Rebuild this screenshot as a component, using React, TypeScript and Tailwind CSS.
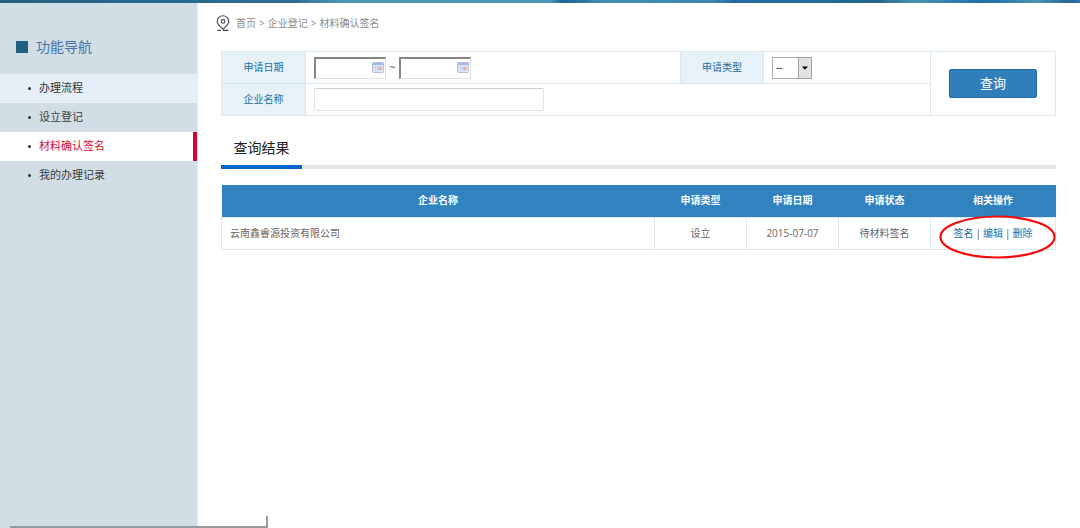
import { useState } from "react";
import clsx from "clsx";

const NAV = ["办理流程", "设立登记", "材料确认签名", "我的办理记录"];

const RECORDS = [
  { name: "云南鑫睿源投资有限公司", type: "设立", date: "2015-07-07", status: "待材料签名" },
];

const LABEL = "flex w-21 shrink-0 items-center justify-center border-r border-[#d8e6ee] bg-[#e6f1f8] text-[10px] text-[#1b6f9f]";

function PinIcon() {
  return (
    <svg width="14" height="17" viewBox="0 0 14 17" fill="none" stroke="#444456" strokeWidth="1.1" aria-hidden="true">
      <path d="M7 14.4C4.6 11.6 1.2 9.6 1.2 6.4a5.8 5.6 0 0 1 11.6 0c0 3.2-3.4 5.2-5.8 8Z" />
      <circle cx="7" cy="6.4" r="1.8" />
      <path d="M1.5 15.4h3.5M7 15.4h5.5" />
    </svg>
  );
}

function CalendarIcon() {
  return (
    <svg width="12" height="11" viewBox="0 0 12 11" aria-hidden="true" className="pointer-events-none absolute top-[5px] right-[2px]">
      <rect x="0.5" y="0.5" width="11" height="10" rx="0.8" fill="#dfe7f8" stroke="#b3bedb" />
      <path d="M1 1h10v2H1z" fill="#a5b9e6" />
      <path d="M3.5 3.5v6M6 3.5v6M8.5 3.5v6M1.5 5.5h9M1.5 7.5h9" stroke="#bccaea" strokeWidth="0.6" />
      <path d="M6.5 5h3v3h-3z" fill="#f0a79c" />
    </svg>
  );
}

function DateField({ label }: { label: string }) {
  return (
    <div className="relative h-[22px] w-18">
      <input
        type="text"
        aria-label={label}
        className="block h-full w-full border-t-2 border-r border-b border-l-2 border-t-[#858585] border-r-[#e0e0e0] border-b-[#e0e0e0] border-l-[#858585] bg-white pr-4 pl-1 text-[10px] outline-none"
      />
      <CalendarIcon />
    </div>
  );
}

function Sidebar() {
  const [active, setActive] = useState("材料确认签名");

  return (
    <aside className="w-[198px] shrink-0 border-r border-[#e2eaee] bg-[#d1dee6]">
      <h2 className="flex h-[71px] items-center gap-2 pt-4 pl-4 text-[14px] text-[#4573a7]">
        <span className="h-3 w-3 bg-[#1f607e]" />
        功能导航
      </h2>
      <nav>
        {NAV.map((item, i) => (
          <a
            key={item}
            href="#"
            onClick={() => setActive(item)}
            className={clsx(
              "flex h-[29px] items-center gap-2 pl-7 text-[11px]",
              active === item
                ? "border-r-4 border-[#cc0a36] bg-white text-[#d0103a]"
                : i === 0
                  ? "bg-[#e6eff7] text-[#333]"
                  : "text-[#3c3c3c]",
            )}
          >
            <span className="h-[3px] w-[3px] rounded-full bg-[#333]" />
            {item}
          </a>
        ))}
      </nav>
    </aside>
  );
}

function SearchForm() {
  return (
    <form onSubmit={(e) => e.preventDefault()} className="mt-5 flex border border-[#dce8ef]">
      <div className="min-w-0 flex-1">
        <div className="flex h-8 border-b border-[#d8e6ee]">
          <div className={LABEL}>申请日期</div>
          <div className="flex flex-1 items-center px-2 text-[11px] text-[#555]">
            <DateField label="开始日期" />
            <span className="w-[13px] text-center">~</span>
            <DateField label="结束日期" />
          </div>
          <label htmlFor="type" className={clsx(LABEL, "border-l")}>申请类型</label>
          <div className="flex w-[166px] shrink-0 items-center px-2">
            <div className="relative h-[22px] w-10">
              <select
                id="type"
                className="block h-full w-full appearance-none border border-[#a9a9b0] bg-white pl-[3px] text-[10px] text-black outline-none"
              >
                <option>--</option>
              </select>
              <svg
                width="14"
                height="22"
                viewBox="0 0 14 22"
                aria-hidden="true"
                className="pointer-events-none absolute top-0 right-0"
              >
                <rect x="0.5" y="0.5" width="13" height="21" fill="#e2e2e2" stroke="#a0a0a6" />
                <path d="M4 9.5h6L7 12.8z" fill="#000" />
              </svg>
            </div>
          </div>
        </div>
        <div className="flex h-[31px]">
          <label htmlFor="company" className={LABEL}>企业名称</label>
          <div className="flex flex-1 items-center px-2">
            <input
              id="company"
              type="text"
              className="h-[23px] w-[230px] rounded-xs border border-[#dfe3e8] border-t-[#c9ccd2] px-1 text-[10px] outline-none"
            />
          </div>
        </div>
      </div>
      <div className="flex w-[125px] shrink-0 items-center justify-center border-l border-[#dfeaf1]">
        <button type="submit" className="h-[29px] w-22 rounded-xs border border-[#1f6ca8] bg-[#307fbb] text-[13px] text-white">
          查询
        </button>
      </div>
    </form>
  );
}

function ResultTable() {
  const cell = "border border-[#dbe7ef] font-normal";
  return (
    <table className="mt-4 w-full table-fixed border-collapse text-[10px] text-[#666]">
      <colgroup>
        <col />
        <col className="w-23" />
        <col className="w-23" />
        <col className="w-23" />
        <col className="w-[125px]" />
      </colgroup>
      <thead>
        <tr className="h-8 bg-[#3183bf] text-white">
          {["企业名称", "申请类型", "申请日期", "申请状态", "相关操作"].map((h) => (
            <th key={h} className="font-bold">{h}</th>
          ))}
        </tr>
      </thead>
      <tbody>
        {RECORDS.map((r) => (
          <tr key={r.name} className="h-8 text-center">
            <td className={clsx(cell, "pl-2 text-left")}>{r.name}</td>
            <td className={cell}>{r.type}</td>
            <td className={cell}>{r.date}</td>
            <td className={cell}>{r.status}</td>
            <td className={clsx(cell, "relative")}>
              <div className="flex items-center justify-center gap-[2px] text-[#1a6fa5]">
                <a href="#">签名</a>
                <span className="text-[#555]">|</span>
                <a href="#">编辑</a>
                <span className="text-[#555]">|</span>
                <a href="#">删除</a>
              </div>
              <svg
                width="118"
                height="46"
                viewBox="0 0 118 46"
                aria-hidden="true"
                className="pointer-events-none absolute -top-1 left-2 max-w-none"
              >
                <ellipse cx="58.5" cy="23" rx="57" ry="20.5" fill="none" stroke="#f40b0b" strokeWidth="2.2" />
              </svg>
            </td>
          </tr>
        ))}
      </tbody>
    </table>
  );
}

export default function App() {
  return (
    <div className="relative flex min-h-screen flex-col bg-white font-['Open_Sans','Noto_Sans_CJK_SC',sans-serif]">
      <header className="h-[3px] bg-[linear-gradient(90deg,#25607f_0%,#26698d_14%,#2d6992_27%,#3f7fa8_29%,#4f99b8_32%,#4f97b8_51%,#1f6396_52%,#438fb4_56%,#3d87b0_66%,#226a9c_68%,#256f9e_73%,#25668c_81%,#4a93b3_85%,#1f6fa6_91%,#4a93b3_96%,#266694_99%,#2d74a8_100%)]" />
      <div className="flex flex-1">
        <Sidebar />
        <main className="min-w-0 flex-1 pr-6 pl-[23px]">
          <div className="-ml-[5px] flex h-7 items-center gap-[6px] pt-3 text-[10px] text-[#8b8b8b]">
            <PinIcon />
            <div className="flex gap-[3px]">
              <a href="#">首页</a>
              <span>&gt;</span>
              <a href="#">企业登记</a>
              <span>&gt;</span>
              <span>材料确认签名</span>
            </div>
          </div>
          <SearchForm />
          <div className="mt-4 flex border-b-4 border-[#e4e4e4]">
            <h3 className="-mb-1 flex h-[37px] w-[81px] items-center justify-center border-b-4 border-[#0466cc] pb-[2px] text-[14px] text-[#222]">
              查询结果
            </h3>
          </div>
          <ResultTable />
        </main>
      </div>
      <div className="absolute bottom-0 left-[10px] h-3 w-[258px] border-r-2 border-b-2 border-[#969da1]" />
    </div>
  );
}
